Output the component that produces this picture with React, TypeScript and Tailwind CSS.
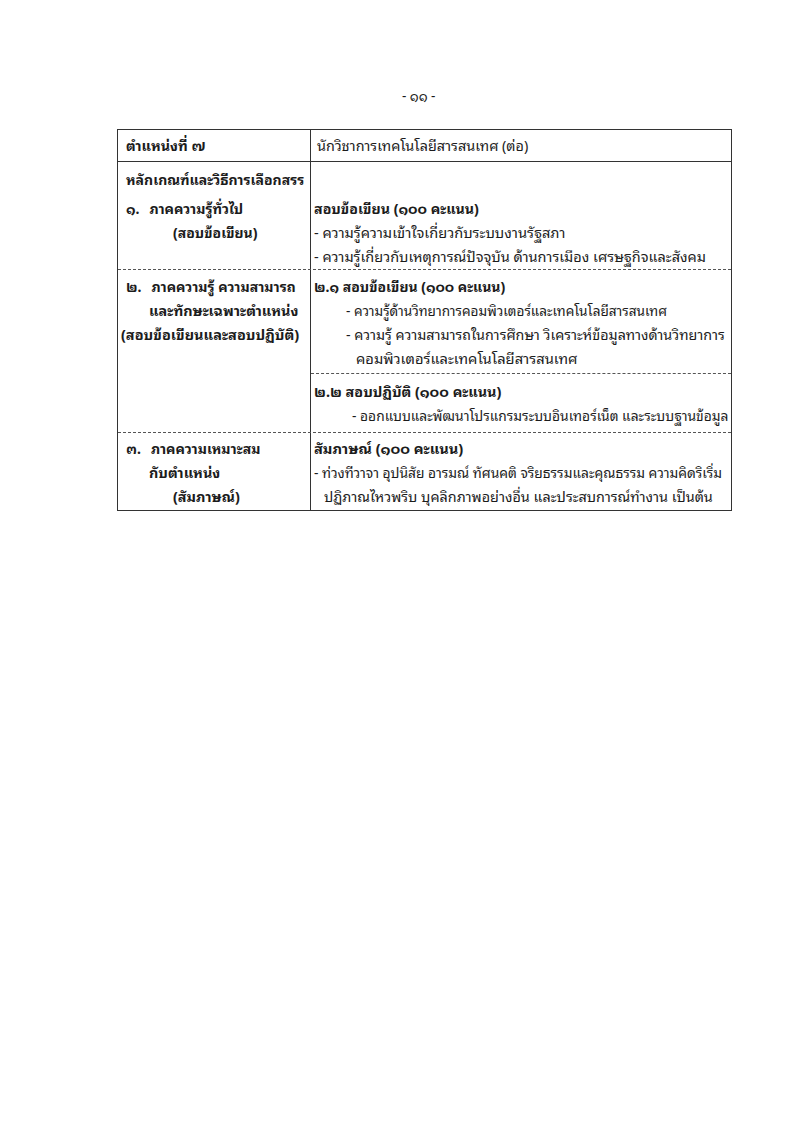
export default function App() {
  return (
    <div
      className="w-[800px] h-[1124px] bg-white text-[#1c1c1c] text-[14px] leading-[24px] whitespace-nowrap"
      style={{ fontFamily: '"Noto Sans Thai Looped", "Noto Sans Thai", sans-serif' }}
    >
      {/* page number */}
      <div className="pt-[85px] pl-[402px] text-[13.5px] leading-[20px]">- ๑๑ -</div>

      <div className="mt-[24px] ml-[117px] w-[615px] border border-[#333]">
        {/* header */}
        <div className="grid grid-cols-[193px_1fr] h-[32px] border-b border-[#333]">
          <div className="border-r border-[#333] pl-[8px] pt-[3px] font-bold text-[14.3px]">ตำแหน่งที่ ๗</div>
          <div className="pl-[6px] pt-[3px] text-[14.4px]">นักวิชาการเทคโนโลยีสารสนเทศ (ต่อ)</div>
        </div>

        {/* section 1 */}
        <div className="grid grid-cols-[193px_1fr] border-b border-dashed border-[#555]">
          <div className="border-r border-[#333] pl-[8px] pt-[5px] pb-[10px] font-bold">
            <div>หลักเกณฑ์และวิธีการเลือกสรร</div>
            <div className="mt-[5px]">
              ๑.<span className="ml-[10px]">ภาคความรู้ทั่วไป</span>
            </div>
            <div className="pl-[47px]">(สอบข้อเขียน)</div>
          </div>
          <div className="pl-[3px] pt-[34px] pb-[1px]">
            <div className="font-bold text-[14.2px]">สอบข้อเขียน (๑๐๐ คะแนน)</div>
            <div className="text-[14.6px]">- ความรู้ความเข้าใจเกี่ยวกับระบบงานรัฐสภา</div>
            <div className="text-[14.5px]">- ความรู้เกี่ยวกับเหตุการณ์ปัจจุบัน ด้านการเมือง เศรษฐกิจและสังคม</div>
          </div>
        </div>

        {/* section 2 */}
        <div className="grid grid-cols-[193px_1fr] border-b border-dashed border-[#555]">
          <div className="border-r border-[#333] pt-[4px] font-bold">
            <div className="pl-[8px]">
              ๒.<span className="ml-[10px]">ภาคความรู้ ความสามารถ</span>
            </div>
            <div className="pl-[31px] text-[14.4px]">และทักษะเฉพาะตำแหน่ง</div>
            <div className="pl-[3px] text-[14.5px]">(สอบข้อเขียนและสอบปฏิบัติ)</div>
          </div>
          <div>
            <div className="pl-[3px] pt-[4px] pb-[3px] border-b border-dashed border-[#555]">
              <div className="font-bold">๒.๑ สอบข้อเขียน (๑๐๐ คะแนน)</div>
              <div className="pl-[32px] text-[13.6px]">- ความรู้ด้านวิทยาการคอมพิวเตอร์และเทคโนโลยีสารสนเทศ</div>
              <div className="pl-[32px] text-[14.3px]">- ความรู้ ความสามารถในการศึกษา วิเคราะห์ข้อมูลทางด้านวิทยาการ</div>
              <div className="pl-[42px] text-[14.7px]">คอมพิวเตอร์และเทคโนโลยีสารสนเทศ</div>
            </div>
            <div className="pl-[3px] pt-[5px] pb-[5px]">
              <div className="font-bold text-[14.4px]">๒.๒ สอบปฏิบัติ (๑๐๐ คะแนน)</div>
              <div className="pl-[38px] text-[13.8px]">- ออกแบบและพัฒนาโปรแกรมระบบอินเทอร์เน็ต และระบบฐานข้อมูล</div>
            </div>
          </div>
        </div>

        {/* section 3 */}
        <div className="grid grid-cols-[193px_1fr]">
          <div className="border-r border-[#333] pt-[3px] pb-[2px] font-bold">
            <div className="pl-[8px]">
              ๓.<span className="ml-[10px]">ภาคความเหมาะสม</span>
            </div>
            <div className="pl-[31px] text-[14.4px]">กับตำแหน่ง</div>
            <div className="pl-[55px] text-[14.4px]">(สัมภาษณ์)</div>
          </div>
          <div className="pl-[3px] pt-[3px] pb-[2px]">
            <div className="font-bold text-[14.6px]">สัมภาษณ์ (๑๐๐ คะแนน)</div>
            <div className="text-[13.8px]">- ท่วงทีวาจา อุปนิสัย อารมณ์ ทัศนคติ จริยธรรมและคุณธรรม ความคิดริเริ่ม</div>
            <div className="pl-[10px] text-[14.4px]">ปฏิภาณไหวพริบ บุคลิกภาพอย่างอื่น และประสบการณ์ทำงาน เป็นต้น</div>
          </div>
        </div>
      </div>
    </div>
  );
}
